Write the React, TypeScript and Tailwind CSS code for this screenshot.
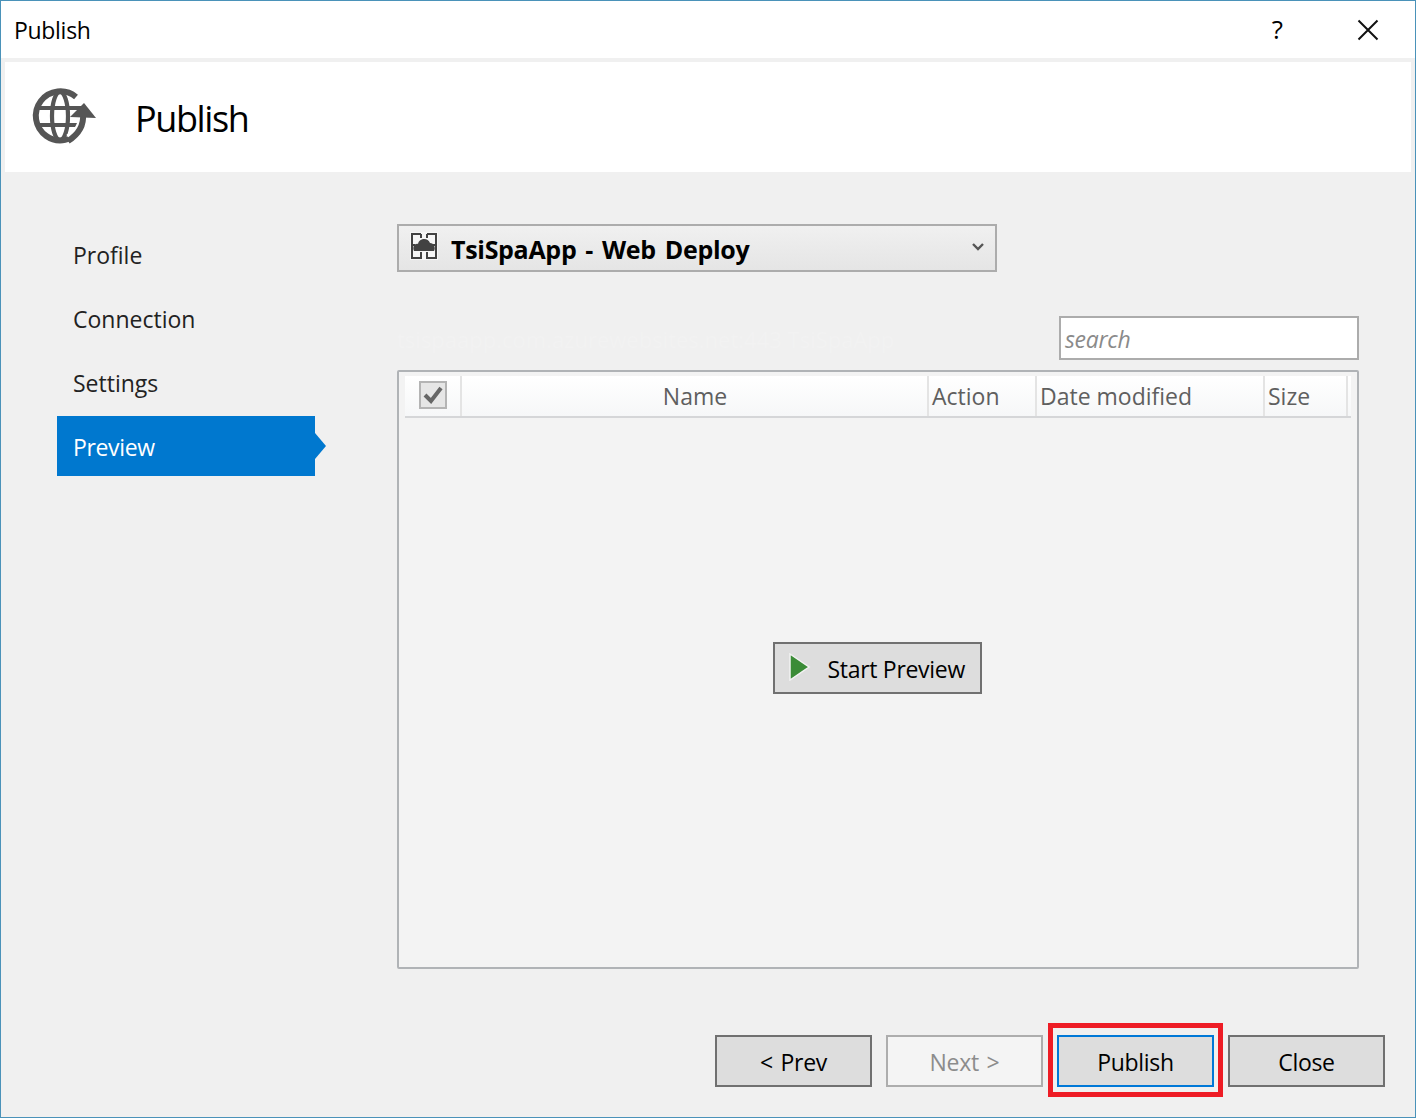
import React from "react";

const font = { fontFamily: '"Open Sans", "Noto Sans", sans-serif' };

function GlobeIcon() {
  return (
    <svg width="68" height="60" viewBox="0 0 68 60" fill="none">
      <path d="M45 10 A24.5 24.5 0 1 0 50 42" stroke="#555555" strokeWidth="6" />
      <g stroke="#555555" strokeWidth="4.2">
        <ellipse cx="29" cy="29" rx="8" ry="24" />
        <path d="M6 21 H50" />
        <path d="M6 38 H47" />
      </g>
      <path d="M38 52 C48 46 53 38 52 27" stroke="#ffffff" strokeWidth="10" />
      <path d="M37 54 C48 47 53 38 52 27" stroke="#555555" strokeWidth="6" />
      <path d="M39 30 L53 16 L65 31 Z" fill="#555555" />
    </svg>
  );
}

function ProfileIcon() {
  return (
    <svg width="28" height="30" viewBox="0 0 28 30" fill="none">
      <rect y="1" width="28" height="28" fill="#f6f6f6" />
      <path d="M11 3 H2 V27 H11 V21 M17 3 H26 V27 H17 V21 M11 3 V7 M17 3 V7 M2 14 H5 M23 14 H26" stroke="#424242" strokeWidth="2" />
      <path d="M4 20 C2 16 5 12 8 13 C9 7 18 6 20 12 C24 12 26 17 24 20 Z" fill="#424242" />
    </svg>
  );
}

function NavItem({ label, active }: { label: string; active?: boolean }) {
  return (
    <div className={active ? "relative flex h-[60px] items-center bg-[#0078cf] pl-4 pt-[2px] text-white" : "flex h-[60px] items-center pl-4 pt-[3px] text-[#222222]"}>
      <span className={active ? "text-[23px] tracking-[-0.35px]" : "text-[23px] tracking-[0px]"}>{label}</span>
      {active && (
        <span className="absolute left-full top-[17px] h-0 w-0 border-y-[13px] border-l-[11px] border-y-transparent border-l-[#0078cf]" />
      )}
    </div>
  );
}

function Btn({ children, kind }: { children: React.ReactNode; kind?: "off" | "focus" }) {
  const cls =
    kind === "off"
      ? "border-[#adadad] bg-[#f4f4f4] text-[#8c8c8c]"
      : kind === "focus"
      ? "border-[#0078d7] bg-[#dddddd] text-black"
      : "border-[#707070] bg-[#dddddd] text-black";
  return (
    <div className={"flex h-[52px] w-[157px] items-center justify-center border-2 pt-[2px] text-[23px] tracking-[-0.3px] [word-spacing:2px] " + cls}>
      {children}
    </div>
  );
}

function Th({ w, label, center }: { w: string; label: string; center?: boolean }) {
  return (
    <div className={w + " flex h-full items-center border-r-2 border-[#e4e4e4] text-[23px] tracking-[0px] text-[#5f5f5f] " + (center ? "justify-center pl-[1px]" : "pl-[3px]")}>
      {label}
    </div>
  );
}

export default function App() {
  return (
    <div style={font} className="flex h-[1118px] w-[1416px] flex-col overflow-hidden border border-[#4a92b9] bg-[#f0f0f0]">
      <div className="flex h-[57px] shrink-0 items-center bg-white pl-[13px] text-black">
        <span className="pt-[2px] text-[23px] tracking-[-0.3px]">Publish</span>
        <span className="ml-auto pb-[2px] text-[26px] leading-none">?</span>
        <svg className="ml-[74px] mr-[36px]" width="22" height="22" viewBox="0 0 22 22">
          <path d="M1.5 1.5 L20.5 20.5 M20.5 1.5 L1.5 20.5" stroke="#111111" strokeWidth="2" />
        </svg>
      </div>
      <div className="mx-1 mt-1 flex h-[110px] shrink-0 items-center bg-white pl-[26px]">
        <GlobeIcon />
        <span className="ml-[36px] pt-[4px] text-[36px] tracking-[-1.4px] text-black">Publish</span>
      </div>
      <div className="flex flex-1 pt-[52px]">
        <div className="ml-[56px] flex w-[258px] shrink-0 flex-col gap-1">
          <NavItem label="Profile" />
          <NavItem label="Connection" />
          <NavItem label="Settings" />
          <NavItem label="Preview" active />
        </div>
        <div className="ml-[82px] flex w-[962px] flex-col">
          <div className="flex h-[48px] w-[600px] items-center border-2 border-[#acacac] bg-gradient-to-b from-[#f0f0f0] to-[#e5e5e5] pl-[11px] pr-[10px]">
            <div className="mb-[4px]">
              <ProfileIcon />
            </div>
            <span className="ml-[13px] pt-[3px] text-[25px] font-bold tracking-[-0.3px] text-black [word-spacing:2.7px]">TsiSpaApp - Web Deploy</span>
            <svg className="ml-auto mb-[3px]" width="14" height="10" viewBox="0 0 14 10" fill="none">
              <path d="M2 2 L7 7 L12 2" stroke="#555555" strokeWidth="2.4" />
            </svg>
          </div>
          <div className="mt-[44px] flex h-[44px] items-center justify-between">
            <span className="w-[650px] truncate pt-[2px] text-[22px] text-[#f2f2f2]">tsispaapp.com.azurewebsites.net:443 TsiSpaApp</span>
            <div className="flex h-[44px] w-[300px] items-center border-2 border-[#acacac] bg-white pl-1 pt-[2px] text-[23px] italic tracking-[-0.3px] text-[#8a8a8a]">
              search
            </div>
          </div>
          <div className="mt-[10px] flex h-[599px] flex-col rounded-[2px] border-2 border-[#b0b3b6] bg-[#f3f3f3] px-[6px] pt-1">
            <div className="flex h-[42px] shrink-0 items-stretch border-b-2 border-[#d5d6d8] bg-gradient-to-b from-white to-[#f6f7f8]">
              <div className="flex h-full w-[57px] items-center justify-center border-r-2 border-[#e4e4e4] pb-[2px]">
                <div className="flex h-[28px] w-[28px] items-center justify-center border-2 border-[#b4b4b4] bg-[#e6e6e6]">
                  <svg width="20" height="18" viewBox="0 0 20 18" fill="none">
                    <path d="M2 9 L8 15 L18 2" stroke="#666666" strokeWidth="4" />
                  </svg>
                </div>
              </div>
              <Th w="w-[467px]" label="Name" center />
              <Th w="w-[108px]" label="Action" />
              <Th w="w-[228px]" label="Date modified" />
              <Th w="w-[83px]" label="Size" />
            </div>
            <div className="flex flex-1 items-center justify-center pb-[50px] pr-[2px]">
              <div className="flex h-[52px] w-[209px] items-center border-2 border-[#707070] bg-[#dddddd] pl-[14px] text-[23px] tracking-[-0.3px] text-black">
                <svg className="mb-[1px]" width="22" height="28" viewBox="0 0 22 28">
                  <path d="M1 1 L20 14 L1 27 Z" fill="#3b8c37" stroke="#f2f2f2" strokeWidth="1.5" />
                </svg>
                <span className="ml-[17px] pt-[3px]">Start Preview</span>
              </div>
            </div>
          </div>
        </div>
      </div>
      <div className="mb-[30px] flex justify-end gap-[14px] pr-[30px]">
        <Btn>&lt; Prev</Btn>
        <Btn kind="off">Next &gt;</Btn>
        <div className="relative">
          <Btn kind="focus">Publish</Btn>
          <div className="absolute -bottom-[10px] -left-[9px] -right-[9px] -top-[12px] border-[5px] border-[#ee1c25]" />
        </div>
        <Btn>Close</Btn>
      </div>
    </div>
  );
}
